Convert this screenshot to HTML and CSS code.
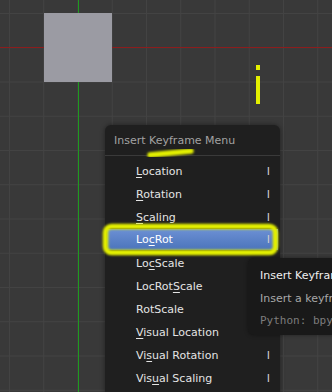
FILE: index.html
```html
<!DOCTYPE html>
<html lang="en">
<head>
    <meta charset="UTF-8">
    <title>Insert Keyframe Menu</title>
    <link rel="stylesheet" href="styles.css">
</head>
<body>
    <div class="viewport">
        <div class="axis-x"></div>
        <div class="axis-y"></div>
        <div class="cube"></div>

        <!-- yellow marker "i" drawn over the viewport -->
        <div class="mark-i">
            <span class="mark-dot"></span>
            <span class="mark-stem"></span>
        </div>

        <div class="menu">
            <div class="menu-title">Insert Keyframe Menu</div>
            <ul class="menu-list">
                <li class="menu-item"><span><u>L</u>ocation</span><span class="key">I</span></li>
                <li class="menu-item"><span><u>R</u>otation</span><span class="key">I</span></li>
                <li class="menu-item"><span><u>S</u>caling</span><span class="key">I</span></li>
                <li class="menu-item active"><span>Lo<u>c</u>Rot</span><span class="key">I</span></li>
                <li class="menu-item"><span>Lo<u>c</u>Scale</span></li>
                <li class="menu-item"><span>LocRot<u>S</u>cale</span></li>
                <li class="menu-item"><span>RotScale</span></li>
                <li class="menu-item"><span><u>V</u>isual Location</span></li>
                <li class="menu-item"><span>Vi<u>s</u>ual Rotation</span><span class="key">I</span></li>
                <li class="menu-item"><span>Vis<u>u</u>al Scaling</span><span class="key">I</span></li>
            </ul>
        </div>

        <!-- hand drawn highlights -->
        <svg class="scribble" width="332" height="392" viewBox="0 0 332 392">
            <defs>
                <filter id="glow" x="-20%" y="-50%" width="140%" height="200%">
                    <feGaussianBlur stdDeviation="1.1"/>
                </filter>
            </defs>
            <path d="M150 155 Q170 153 191 151" stroke="#e2ef00" stroke-width="5.5" stroke-linecap="round" fill="none" filter="url(#glow)"/>
            <rect x="105.5" y="226.5" width="170" height="26" rx="6" stroke="#e2ef00" stroke-width="5.5" fill="none" filter="url(#glow)"/>
        </svg>

        <div class="tooltip">
            <div class="tip-title">Insert Keyframe Menu</div>
            <div class="tip-desc">Insert a keyframe for the selected objects</div>
            <div class="tip-python">Python: bpy.ops.anim.keyframe_insert_menu()</div>
        </div>
    </div>
</body>
</html>
```

FILE: styles.css
```css
body {
    margin: 0;
    font-family: "DejaVu Sans", sans-serif;
    overflow: hidden;
}

.viewport {
    position: relative;
    width: 332px;
    height: 392px;
    overflow: hidden;
    background-color: #393939;
    background-image:
        linear-gradient(to right, #434343 1px, transparent 1px),
        linear-gradient(to bottom, #434343 1px, transparent 1px);
    background-size: 34.25px 34.25px;
    background-position: 9px 13px;
}

.axis-x {
    position: absolute;
    left: 0;
    right: 0;
    top: 47px;
    height: 1px;
    background: #8c1d1d;
}

.axis-y {
    position: absolute;
    top: 0;
    bottom: 0;
    left: 78px;
    width: 1px;
    background: #1f9a1f;
}

.cube {
    position: absolute;
    left: 44px;
    top: 13px;
    width: 68px;
    height: 69px;
    background: #9b9ba3;
}

.mark-i {
    position: absolute;
    left: 256px;
    top: 65px;
    display: flex;
    flex-direction: column;
    gap: 6px;
}

.mark-dot,
.mark-stem {
    display: block;
    width: 4px;
    background: #e4f000;
}

.mark-dot {
    height: 5px;
}

.mark-stem {
    height: 28px;
}

.menu {
    position: absolute;
    left: 105px;
    top: 125px;
    width: 175px;
    height: 290px;
    background: #1f1f1f;
    border-radius: 6px;
    box-shadow: 0 0 5px rgba(0, 0, 0, 0.45);
}

.menu-title {
    height: 30px;
    line-height: 32px;
    padding-left: 9px;
    font-size: 11px;
    color: #a2a2a2;
    border-bottom: 1px solid #3a3a3a;
}

.menu-list {
    list-style: none;
    margin: 0;
    padding: 4px 0 0;
}

.menu-item {
    display: flex;
    justify-content: space-between;
    align-items: center;
    height: 23px;
    margin: 0 2px;
    padding: 0 8px 0 29px;
    font-size: 11px;
    color: #e4e4e4;
}

.menu-item u {
    text-underline-offset: 2px;
}

.menu-item.active {
    height: 21px;
    margin-bottom: 2px;
    background: linear-gradient(to bottom, #6c90d4, #4b74bb);
    color: #ffffff;
}

.key {
    color: #cfcfcf;
}

.scribble {
    position: absolute;
    left: 0;
    top: 0;
}

.tooltip {
    position: absolute;
    left: 248px;
    top: 258px;
    width: 200px;
    height: 77px;
    padding: 8px 12px;
    box-sizing: border-box;
    background: #191919;
    border-radius: 6px;
    box-shadow: 0 0 4px rgba(0, 0, 0, 0.4);
    font-size: 11px;
    white-space: nowrap;
}

.tip-title {
    height: 21px;
    line-height: 20px;
    color: #f0f0f0;
}

.tip-desc {
    height: 23px;
    line-height: 23px;
    color: #a8a8a8;
}

.tip-python {
    line-height: 22px;
    font-family: "DejaVu Sans Mono", monospace;
    color: #7d7d7d;
}
```
